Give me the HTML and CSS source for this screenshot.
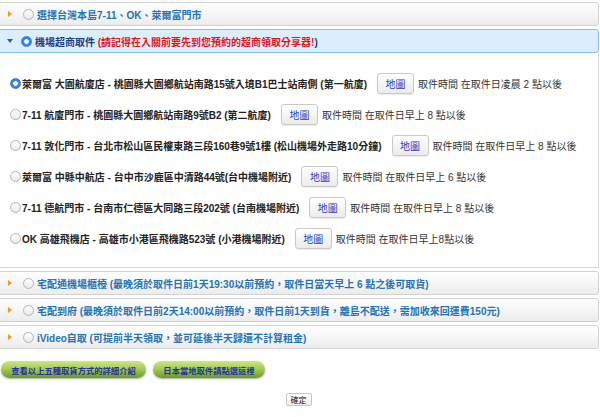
FILE: index.html
```html
<!DOCTYPE html>
<html lang="zh-Hant">
<head>
<meta charset="utf-8">
<link rel="stylesheet" href="styles.css">
</head>
<body>
<div class="wrap">
  <div class="panel">
    <span class="arrow arrow-right"></span>
    <span class="radio"></span>
    <span class="ptitle">選擇台灣本島7-11、OK、萊爾富門市</span>
  </div>
  <div class="panel panel-open">
    <span class="arrow arrow-down"></span>
    <span class="radio radio-on"></span>
    <span class="ptitle navy">機場超商取件 <span class="red">(請記得在入關前要先到您預約的超商領取分享器!</span>)</span>
  </div>
  <div class="content">
    <div class="row">
      <span class="radio radio-on"></span>
      <span class="label">萊爾富 大園航廈店 - 桃園縣大園鄉航站南路15號入境B1巴士站南側 (第一航廈)</span>
      <span class="mapbtn">地圖</span>
      <span class="time">取件時間 在取件日凌晨 2 點以後</span>
    </div>
    <div class="row">
      <span class="radio"></span>
      <span class="label">7-11 航廈門市 - 桃園縣大園鄉航站南路9號B2 (第二航廈)</span>
      <span class="mapbtn">地圖</span>
      <span class="time">取件時間 在取件日早上 8 點以後</span>
    </div>
    <div class="row">
      <span class="radio"></span>
      <span class="label">7-11 敦化門市 - 台北市松山區民權東路三段160巷9號1樓 (松山機場外走路10分鐘)</span>
      <span class="mapbtn">地圖</span>
      <span class="time">取件時間 在取件日早上 8 點以後</span>
    </div>
    <div class="row">
      <span class="radio"></span>
      <span class="label">萊爾富 中縣中航店 - 台中市沙鹿區中清路44號(台中機場附近)</span>
      <span class="mapbtn">地圖</span>
      <span class="time">取件時間 在取件日早上 6 點以後</span>
    </div>
    <div class="row">
      <span class="radio"></span>
      <span class="label">7-11 德航門市 - 台南市仁德區大同路三段202號 (台南機場附近)</span>
      <span class="mapbtn">地圖</span>
      <span class="time">取件時間 在取件日早上 8 點以後</span>
    </div>
    <div class="row">
      <span class="radio"></span>
      <span class="label">OK 高雄飛機店 - 高雄市小港區飛機路523號 (小港機場附近)</span>
      <span class="mapbtn">地圖</span>
      <span class="time">取件時間 在取件日早上8點以後</span>
    </div>
  </div>
  <div class="panel panel-gap">
    <span class="arrow arrow-right"></span>
    <span class="radio"></span>
    <span class="ptitle">宅配通機場櫃檯 (最晚須於取件日前1天19:30以前預約，取件日當天早上 6 點之後可取貨)</span>
  </div>
  <div class="panel">
    <span class="arrow arrow-right"></span>
    <span class="radio"></span>
    <span class="ptitle">宅配到府 (最晚須於取件日前2天14:00以前預約，取件日前1天到貨，離島不配送，需加收來回運費150元)</span>
  </div>
  <div class="panel">
    <span class="arrow arrow-right"></span>
    <span class="radio"></span>
    <span class="ptitle">iVideo自取 (可提前半天領取，並可延後半天歸還不計算租金)</span>
  </div>
  <div class="actions">
    <span class="green green-wide">查看以上五種取貨方式的詳細介紹</span>
    <span class="green green-narrow">日本當地取件請點選這裡</span>
  </div>
  <div class="confirm">
    <span class="okbtn">確定</span>
  </div>
</div>
</body>
</html>
```

FILE: styles.css
```css
* { box-sizing: border-box; }

body {
  margin: 0;
  background: #fff;
  font-family: "Liberation Sans", "Noto Sans CJK TC", sans-serif;
  font-size: 10px;
  color: #222;
}

.wrap {
  width: 601px;
  margin-left: -2px;
  padding-top: 2px;
}

.panel {
  height: 24px;
  display: flex;
  align-items: center;
  border: 1px solid #d2d2d2;
  border-radius: 3px;
  background: linear-gradient(#ffffff 0%, #f6f6f6 50%, #ececec 100%);
  margin-bottom: 3px;
  padding-left: 9px;
}

.panel-open {
  background: #dcedfd;
  border-color: #82c1ee;
  margin-bottom: 0;
}

.panel-gap {
  margin-top: 3px;
}

.arrow {
  width: 0;
  height: 0;
  margin-right: 12px;
}

.arrow-right {
  border-top: 3px solid transparent;
  border-bottom: 3px solid transparent;
  border-left: 4px solid #f39a12;
  margin-right: 11px;
}

.arrow-down {
  border-left: 3.5px solid transparent;
  border-right: 3.5px solid transparent;
  border-top: 4px solid #1f62b8;
  margin-left: -1px;
  margin-right: 8px;
}

.radio {
  width: 11px;
  height: 11px;
  border-radius: 50%;
  border: 1px solid #b4b4b4;
  background: linear-gradient(#ffffff, #e9e9e9);
  flex: none;
  margin-right: 3px;
}

.radio-on {
  border-color: #3e7fd8;
  background: radial-gradient(circle, #ffffff 0 2px, #3a8af0 2.6px, #2a6fd6 100%);
}

.ptitle {
  font-weight: bold;
  color: #2274b4;
  white-space: nowrap;
}

.navy { color: #1c3c80; }
.red { color: #ee1111; }

.content {
  border-right: 1px solid #d6d6d6;
  border-bottom: 1px solid #d6d6d6;
  padding: 20px 0 18px 12px;
  display: flex;
  flex-direction: column;
  gap: 10px;
}

.row {
  height: 21px;
  display: flex;
  align-items: center;
  white-space: nowrap;
}

.row .radio { margin-right: 1px; }

.label {
  font-weight: bold;
  color: #222;
  margin-right: 10px;
}

.mapbtn {
  height: 21px;
  width: 37px;
  display: flex;
  align-items: center;
  justify-content: center;
  border: 1px solid #c9c9c9;
  border-radius: 3px;
  background: linear-gradient(#ffffff, #ebebeb);
  color: #2b3bc4;
  margin-right: 4px;
  box-shadow: 0 1px 1px rgba(0,0,0,0.08);
}

.time {
  color: #333;
}

.actions {
  display: flex;
  gap: 7px;
  padding-left: 3px;
  margin-top: 12px;
}

.green {
  height: 17px;
  display: flex;
  align-items: center;
  justify-content: center;
  border-radius: 9px;
  background: linear-gradient(#cfe58a 0%, #a8cb55 45%, #86b236 75%, #6c9923 100%);
  box-shadow: 0 1px 2px rgba(60,80,20,0.45);
  color: #2230a8;
  font-weight: bold;
  font-size: 8.3px;
}

.green-wide { width: 145px; }
.green-narrow { width: 112px; }

.confirm {
  display: flex;
  justify-content: center;
  padding-left: 0;
  margin-top: 15px;
}

.okbtn {
  width: 26px;
  height: 13px;
  display: flex;
  align-items: center;
  justify-content: center;
  border: 1px solid #c6c6c6;
  border-radius: 2px;
  background: linear-gradient(#ffffff, #f0f0f0);
  font-size: 8px;
  color: #111;
}
```
